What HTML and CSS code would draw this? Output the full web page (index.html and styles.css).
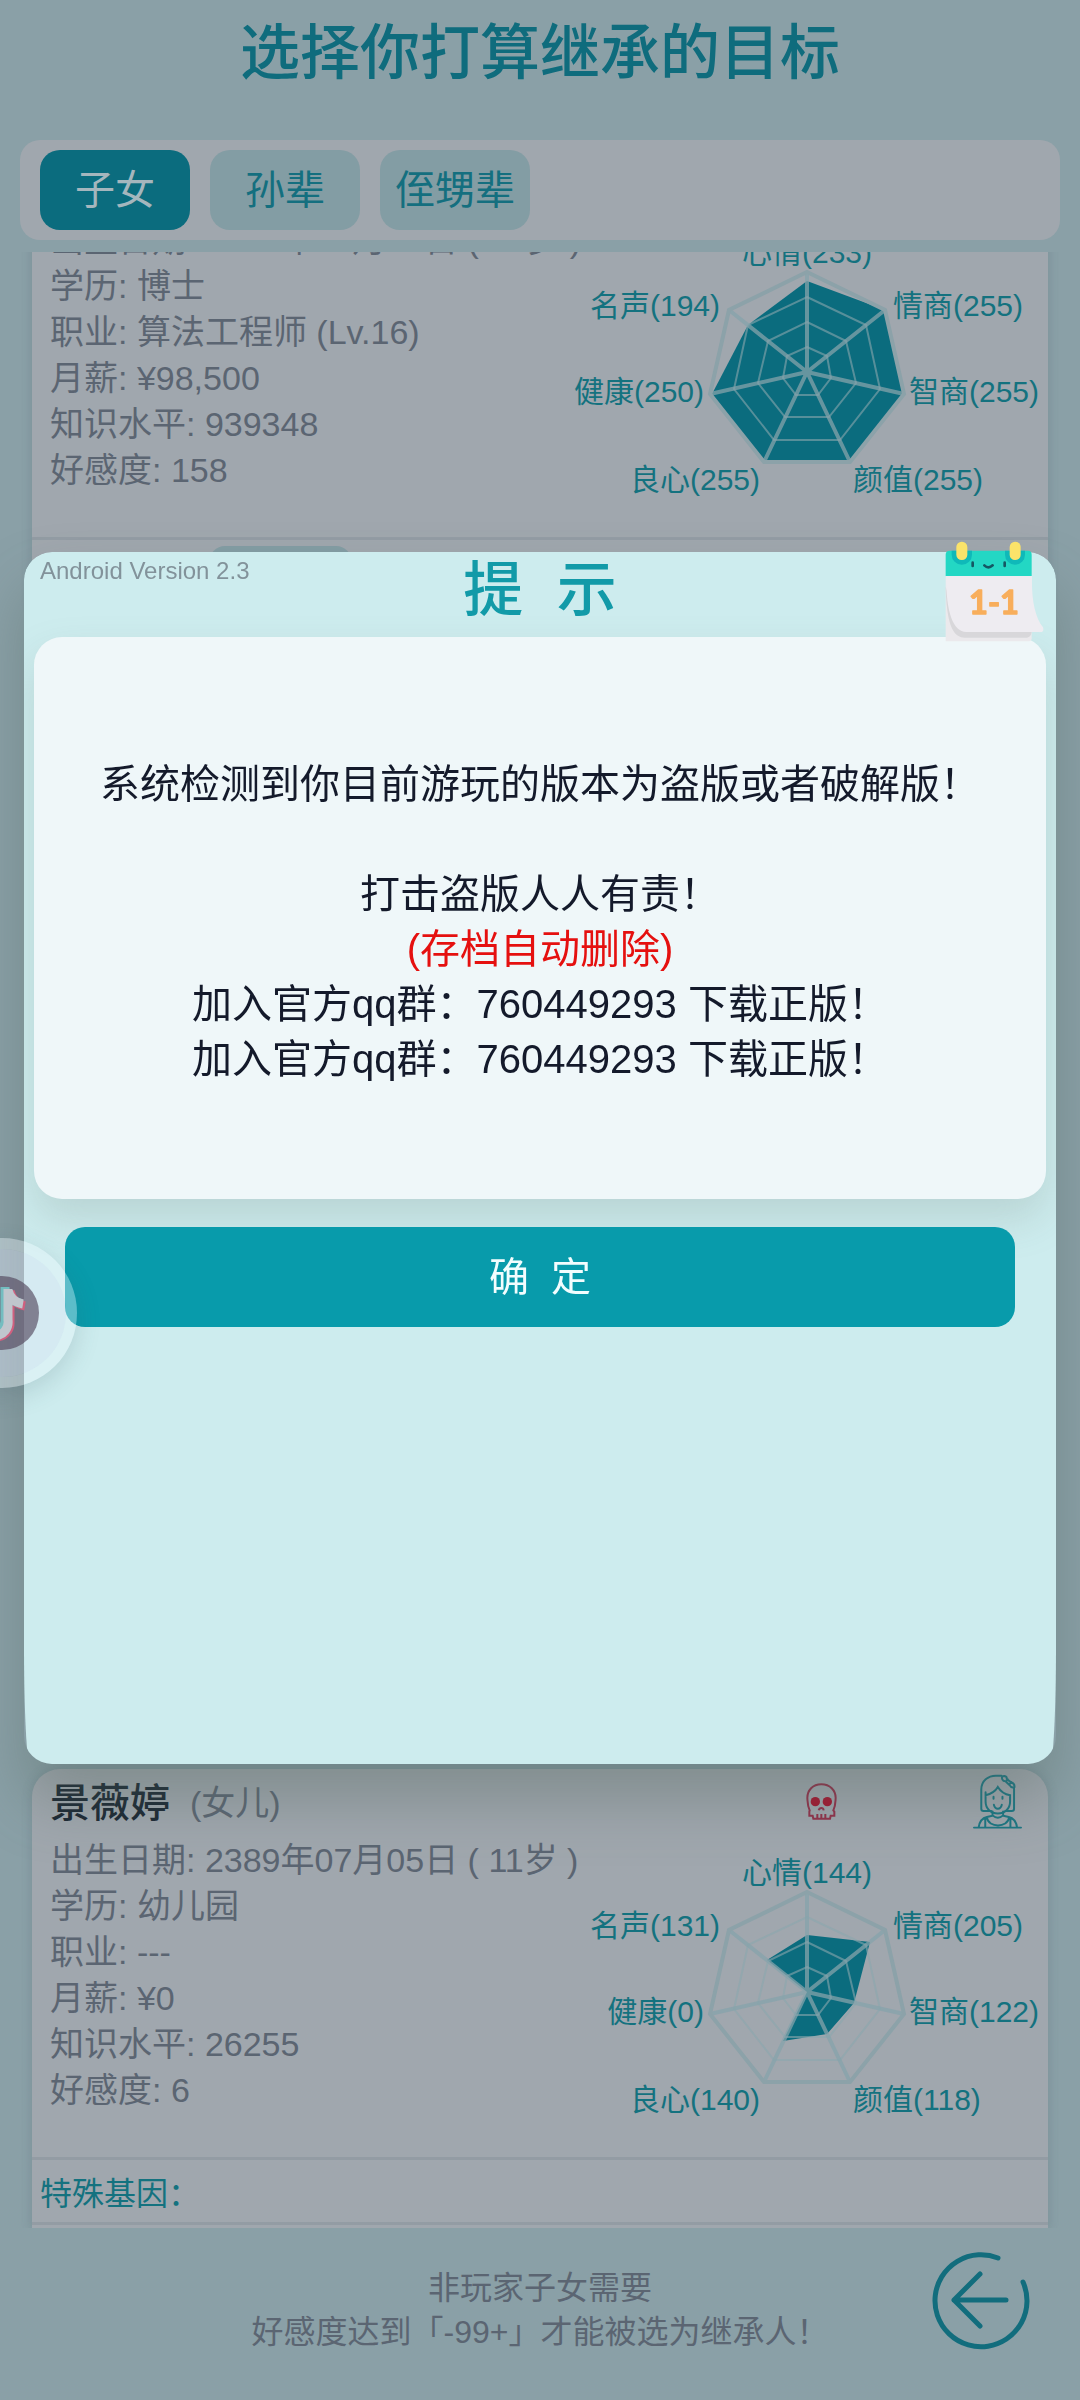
FILE: index.html
```html
<!DOCTYPE html>
<html lang="zh-CN">
<head>
<meta charset="utf-8">
<meta name="viewport" content="width=device-width, initial-scale=1">
<title>选择你打算继承的目标</title>
<link rel="stylesheet" href="styles.css">
</head>
<body>
<svg class="defs" aria-hidden="true">
  <defs>
    <g id="radar-grid">
      <g class="ring">
        <path d="M0-25L20-16 24 6 11 23-11 23-24 6-20-16Z"/>
        <path d="M0-50L39-31 49 11 22 45-22 45-49 11-39-31Z"/>
        <path d="M0-75L59-47 73 17 33 68-33 68-73 17-59-47Z"/>
      </g>
      <path class="spokes" d="M0 0V-100M0 0L78-62M0 0L97 22M0 0L43 90M0 0L-43 90M0 0L-97 22M0 0L-78-62"/>
      <path class="rim" d="M0-100L78-62 97 22 43 90-43 90-97 22-78-62Z"/>
    </g>
  </defs>
</svg>

<main class="page">
  <h1 class="page-title">选择你打算继承的目标</h1>
  <nav class="tabs">
    <button class="tab tab-active" type="button">子女</button>
    <button class="tab" type="button">孙辈</button>
    <button class="tab" type="button">侄甥辈</button>
  </nav>

  <section class="list">
    <div class="track">
      <article class="card">
        <header class="card-head"></header>
        <div class="card-body">
          <ul class="facts">
            <li>出生日期: 2360年09月24日 ( 39岁 )</li>
            <li>学历: 博士</li>
            <li>职业: 算法工程师 (Lv.16)</li>
            <li>月薪: ¥98,500</li>
            <li>知识水平: 939348</li>
            <li>好感度: 158</li>
          </ul>
          <svg class="radar" viewBox="-239 -157 480 322">
            <path class="area" d="M0-91L78-62 97 22 43 90-43 90-95 22-59-47Z"/>
            <use href="#radar-grid"/>
            <text class="mid" x="0" y="-109">心情(233)</text>
            <text x="86" y="-56">情商(255)</text>
            <text x="102" y="30">智商(255)</text>
            <text x="46" y="118">颜值(255)</text>
            <text class="end" x="-47" y="118">良心(255)</text>
            <text class="end" x="-103" y="30">健康(250)</text>
            <text class="end" x="-87" y="-56">名声(194)</text>
          </svg>
        </div>
        <div class="genes genes-chips"><span class="chip"></span></div>
      </article>

      <article class="card">
        <header class="card-head">
          <h2 class="name">景薇婷</h2>
          <span class="relation">(女儿)</span>
          <svg class="skull" viewBox="80 68 93 112">
            <path d="M91 150C84 135 85 125 84 113C84 90 100 72 126 72S169 90 169 113C168 126 169 135 162 150L165 154V166H154L152 175H102L100 166H90V154Z"/>
            <path d="M118 150Q120 143 126 143T133 150M114 161V174M126 161V174M138 161V174"/>
            <circle class="eye" cx="108" cy="124" r="14"/><circle class="eye" cx="144" cy="124" r="14"/>
          </svg>
          <svg class="girl" viewBox="580 55 148 168">
            <path d="M583 217H725M597 216C600 197 609 188 622 185L639 181V168M671 168V181L688 185C701 188 710 197 713 216M617 216V190M693 216V190M622 187C627 218 684 218 689 187M639 180Q655 194 671 180"/>
            <path d="M635 167H612Q605 167 605 160V102C605 75 626 60 649 60H666M704 98V160Q704 167 697 167H677M618 110V138C618 160 634 174 655 174S692 160 692 138V119C675 116 663 107 655 94C648 106 635 115 618 119"/>
            <path d="M643 148Q646 160 655 160T667 148M642 124V130M669 124V130"/>
            <path d="M669 72Q664 61 675 61Q683 62 682 70L695 80Q707 84 705 95Q695 98 690 88L678 77Q671 77 669 72ZM679 78L685 71M689 87L696 80"/>
          </svg>
        </header>
        <div class="card-body">
          <ul class="facts">
            <li>出生日期: 2389年07月05日 ( 11岁 )</li>
            <li>学历: 幼儿园</li>
            <li>职业: ---</li>
            <li>月薪: ¥0</li>
            <li>知识水平: 26255</li>
            <li>好感度: 6</li>
          </ul>
          <svg class="radar" viewBox="-239 -157 480 322">
            <path class="area" d="M0-57L63-50 47 11 20 42-24 49 0 0-40-32Z"/>
            <use href="#radar-grid"/>
            <text class="mid" x="0" y="-109">心情(144)</text>
            <text x="86" y="-56">情商(205)</text>
            <text x="102" y="30">智商(122)</text>
            <text x="46" y="118">颜值(118)</text>
            <text class="end" x="-47" y="118">良心(140)</text>
            <text class="end" x="-103" y="30">健康(0)</text>
            <text class="end" x="-87" y="-56">名声(131)</text>
          </svg>
        </div>
        <div class="genes">特殊基因：</div>
      </article>
    </div>
  </section>

  <footer class="footer">
    <p class="hint">非玩家子女需要<br>好感度达到「-99+」才能被选为继承人！</p>
    <button class="back" type="button" aria-label="返回">
      <svg viewBox="0 0 100 100"><path d="M68 8A46 46 0 1 0 93 32M76 50H24M50 24L24 50 50 76"/></svg>
    </button>
  </footer>
</main>

<div class="modal" role="dialog" aria-labelledby="modal-title">
  <div class="modal-clip">
    <div class="modal-sheet">
      <header class="modal-head">
        <span class="version">Android Version 2.3</span>
        <h2 class="modal-title" id="modal-title">提&nbsp;&nbsp;示</h2>
      </header>
      <div class="message">
        <p>系统检测到你目前游玩的版本为盗版或者破解版！</p>
        <p>&nbsp;</p>
        <p>打击盗版人人有责！</p>
        <p class="danger">(存档自动删除)</p>
        <p>加入官方qq群：760449293 下载正版！</p>
        <p>加入官方qq群：760449293 下载正版！</p>
      </div>
      <button class="confirm" type="button">确&nbsp;&nbsp;定</button>
    </div>
  </div>
  <svg class="calendar" viewBox="70 60 309 309">
    <path fill="#ebe9ec" d="M78 170H336V355Q336 364 327 364H78Z"/>
    <path fill="#d8d7da" d="M78 200C80 270 88 330 115 347Q123 353 135 353H322Q334 351 336 336L120 320Z"/>
    <path fill="#eeecf1" d="M79 168H337C335 235 345 290 370 322Q374 336 362 336H140C100 334 80 280 79 168Z"/>
    <path fill="#23d7c4" d="M78 168V104Q78 92 90 92H325Q336 92 336 104V168Z"/>
    <path fill="#0fb9b9" d="M96 92H157V104A30 30 0 0 1 96 104ZM256 92H316V104A30 30 0 0 1 256 104Z"/>
    <rect fill="#fbe36a" x="110" y="65" width="33" height="55" rx="16"/>
    <rect fill="#fbe36a" x="270" y="65" width="33" height="55" rx="16"/>
    <path fill="none" stroke="#155763" stroke-width="8" stroke-linecap="round" d="M159 128V138M255 128V138M194 136Q206 148 219 136"/>
    <text x="223" y="283">1-1</text>
  </svg>
</div>

<button class="float-ball" type="button" aria-label="悬浮球">
  <svg viewBox="0 0 74 74">
    <circle cx="37" cy="37" r="37" fill="#4d4157" fill-opacity=".62"/>
    <g fill="none" stroke-width="9">
      <path stroke="#d0607f" d="M45 15V46A14 14 0 1 1 31 33M45 15Q48 28 60 30"/>
      <path stroke="#73bdc0" d="M40 11V43A14 14 0 1 1 26 30M40 13Q43 25 55 27"/>
      <path stroke="#c0c6cd" d="M43 13V44A14 14 0 1 1 29 32M43 14Q46 26 58 28"/>
    </g>
  </svg>
</button>
</body>
</html>
```
FILE: styles.css
```css
* { box-sizing: border-box; }

body {
  margin: 0;
  background: #8aa0a7;
  color: #5b6572;
  font-family: "Liberation Sans", "Noto Sans CJK SC", sans-serif;
}

h1, h2, p, ul { margin: 0; padding: 0; }
ul { list-style: none; }
button { border: 0; padding: 0; font-family: inherit; }
svg { display: block; flex: none; }
.defs { position: absolute; width: 0; height: 0; }

.page {
  display: flex;
  flex-direction: column;
  height: 100vh;
}

.page-title {
  padding-top: 10px;
  height: 140px;
  color: #0f6c7d;
  font-size: 60px;
  font-weight: 500;
  line-height: 88px;
  text-align: center;
}

.tabs {
  display: flex;
  gap: 20px;
  margin: 0 20px 12px;
  padding: 10px 20px;
  border-radius: 20px;
  background: #a0a7ae;
}

.tab {
  width: 150px;
  height: 80px;
  padding-bottom: 6px;
  border-radius: 20px;
  background: #839da4;
  color: #146f7f;
  font-size: 40px;
}

.tab-active { background: #0b6c7e; color: #a5b6bd; }

.list {
  flex: 1;
  min-height: 0;
  padding: 0 32px;
  overflow: hidden;
  display: flex;
}

/* The list is scrolled part of the way down its first card. */
.track {
  flex: 1;
  display: flex;
  flex-direction: column;
  justify-content: space-between;
  margin-top: -103px;
}

.card {
  padding-bottom: 3px;
  border-radius: 28px 28px 0 0;
  background: #a0a7ae;
  box-shadow: 0 0 10px 2px rgba(60, 80, 95, .16);
}

.card-head {
  display: flex;
  align-items: center;
  height: 66px;
  padding: 0 26px 0 18px;
}

.name {
  margin-right: 20px;
  padding-bottom: 4px;
  color: #1b2733;
  font-size: 40px;
  font-weight: 500;
}

.relation { padding-bottom: 4px; font-size: 34px; }

.skull {
  width: 31px;
  margin-left: auto;
  margin-right: 136px;
  fill: none;
  stroke: #92304a;
  stroke-width: 6;
}
.skull .eye { fill: #a5142f; stroke: none; }

.girl {
  width: 49px;
  fill: none;
  stroke: #1b7683;
  stroke-width: 6;
  stroke-linecap: round;
}

.card-body {
  display: flex;
  justify-content: space-between;
  padding-left: 18px;
}

.facts {
  width: 518px;
  padding-top: 2px;
  font-size: 34px;
  line-height: 46px;
  white-space: nowrap;
}

.radar { width: 480px; height: 322px; overflow: visible; }
.radar text { fill: #14727f; font-size: 30px; }
.radar .mid { text-anchor: middle; }
.radar .end { text-anchor: end; }
.area { fill: #0b6c7e; }
.ring, .spokes, .rim { fill: none; }
.ring { stroke: #8ba6ad; stroke-width: 2; stroke-opacity: .6; }
.spokes { stroke: #85a3ab; stroke-width: 4; stroke-opacity: .75; }
.rim { stroke: #8ca2a9; stroke-width: 4; }

.genes {
  display: flex;
  align-items: center;
  height: 68px;
  padding-left: 8px;
  border-top: 3px solid #939ca4;
  border-bottom: 3px solid #939ca4;
  color: #14727f;
  font-size: 32px;
}

.genes-chips { padding-left: 177px; }
.chip { width: 143px; height: 50px; border-radius: 16px; background: #839da4; }

.footer {
  display: grid;
  grid-template-columns: 1fr auto 1fr;
  align-items: start;
  padding: 22px 50px 0;
  height: 172px;
}

.hint {
  grid-column: 2;
  padding-top: 16px;
  font-size: 32px;
  line-height: 44px;
  text-align: center;
}

.back {
  justify-self: end;
  width: 100px;
  height: 100px;
  background: none;
}
.back svg {
  fill: none;
  stroke: #126d7d;
  stroke-width: 5;
  stroke-linecap: round;
  stroke-linejoin: round;
}

.modal {
  position: fixed;
  top: 23%;
  left: 24px;
  right: 24px;
  height: 50.5%;
  border-radius: 28px;
  box-shadow: 0 36px 60px rgba(80, 100, 92, .38);
}

/* Long side taper at the bottom, combined with the sheet's own corners. */
.modal-clip {
  height: 100%;
  overflow: hidden;
  border-radius: 28px 28px 6px 6px / 28px 28px 120px 120px;
}

.modal-sheet {
  display: flex;
  flex-direction: column;
  height: 100%;
  border-radius: 28px;
  background: #cdecee;
}

.modal-head {
  display: grid;
  grid-template-columns: 1fr auto 1fr;
  height: 85px;
  padding: 0 16px;
}

.version {
  padding-top: 4px;
  color: #82929a;
  font-size: 24px;
  line-height: 30px;
}

.modal-title {
  color: #129aa8;
  font-size: 60px;
  font-weight: 500;
  line-height: 78px;
}

.message {
  display: flex;
  flex-direction: column;
  justify-content: center;
  height: 562px;
  margin: 0 10px 28px;
  padding-top: 8px;
  border-radius: 28px;
  background: #eff7f9;
  box-shadow: 0 20px 40px rgba(120, 140, 130, .24);
  color: #141a2b;
  font-size: 40px;
  line-height: 55px;
  text-align: center;
}

.danger { color: #e5100f; }

.confirm {
  position: relative;
  height: 100px;
  flex: none;
  margin: 0 41px;
  padding-bottom: 6px;
  border-radius: 20px;
  background: #089bab;
  color: #f2fdfe;
  font-size: 40px;
}

.calendar {
  position: absolute;
  top: -12px;
  right: 10px;
  width: 103px;
}
.calendar text {
  fill: #f8ae5c;
  stroke: #f8ae5c;
  stroke-width: 4;
  stroke-linejoin: round;
  font-family: Lato, sans-serif;
  font-size: 98px;
  font-weight: 700;
  text-anchor: middle;
}

.float-ball {
  position: fixed;
  top: 1238px;
  left: -73px;
  display: flex;
  align-items: center;
  justify-content: center;
  width: 150px;
  height: 150px;
  border: 11px solid rgba(240, 250, 255, .36);
  border-radius: 50%;
  background: rgba(225, 232, 248, .42);
  background-clip: padding-box;
  box-shadow: 0 8px 24px rgba(60, 90, 100, .18);
}
.float-ball svg { width: 74px; }
```
